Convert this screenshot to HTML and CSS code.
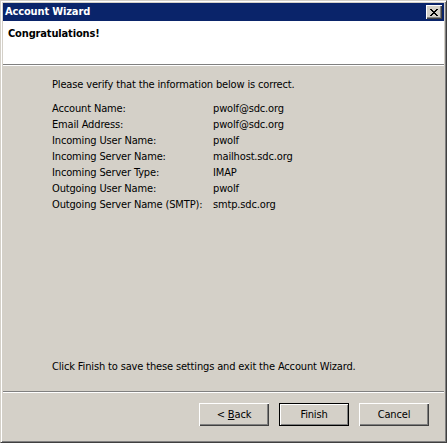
FILE: index.html
```html
<!DOCTYPE html>
<html lang="en">
<head>
    <meta charset="UTF-8">
    <title>Account Wizard</title>
    <link rel="stylesheet" href="styles.css">
</head>
<body>
    <div class="window">
        <div class="titlebar">
            <span class="title">Account Wizard</span>
            <button class="close-btn" aria-label="Close">
                <svg width="8" height="7" viewBox="0 0 8 7">
                    <path d="M0 0h2v1h1v1h2v-1h1v-1h2v1h-1v1h-1v1h-1v1h1v1h1v1h1v1h-2v-1h-1v-1h-2v1h-1v1h-2v-1h1v-1h1v-1h1v-1h-1v-1h-1v-1h-1z" fill="#000"/>
                </svg>
            </button>
        </div>

        <div class="header">
            <h1>Congratulations!</h1>
        </div>

        <div class="content">
            <p class="intro">Please verify that the information below is correct.</p>
            <div class="summary">
                <span>Account Name:</span><span>pwolf@sdc.org</span>
                <span>Email Address:</span><span>pwolf@sdc.org</span>
                <span>Incoming User Name:</span><span>pwolf</span>
                <span>Incoming Server Name:</span><span>mailhost.sdc.org</span>
                <span>Incoming Server Type:</span><span>IMAP</span>
                <span>Outgoing User Name:</span><span>pwolf</span>
                <span>Outgoing Server Name (SMTP):</span><span>smtp.sdc.org</span>
            </div>
            <p class="outro">Click Finish to save these settings and exit the Account Wizard.</p>
        </div>

        <div class="footer">
            <button class="btn">&lt; <u>B</u>ack</button>
            <button class="btn default">Finish</button>
            <button class="btn">Cancel</button>
        </div>
    </div>
</body>
</html>
```

FILE: styles.css
```css
:root {
    --face: #d4d0c8;
    --highlight: #ffffff;
    --shadow: #808080;
    --dark-shadow: #404040;
    --caption: #0a246a;
}

* {
    margin: 0;
    padding: 0;
    box-sizing: border-box;
}

body {
    font-family: 'DejaVu Sans Condensed', 'DejaVu Sans', sans-serif;
    font-size: 11px;
    line-height: 16px;
    letter-spacing: -0.15px;
    color: #000;
    background: var(--face);
}

.window {
    width: 447px;
    height: 443px;
    display: flex;
    flex-direction: column;
    background: var(--face);
    border: 1px solid;
    border-color: var(--face) var(--dark-shadow) var(--dark-shadow) var(--face);
    box-shadow: inset 1px 1px 0 var(--highlight), inset -1px -1px 0 var(--shadow);
    padding: 2px;
}

.titlebar {
    height: 18px;
    flex-shrink: 0;
    display: flex;
    align-items: center;
    justify-content: space-between;
    padding: 0 2px;
    background: var(--caption);
    color: #fff;
}

.title {
    font-weight: bold;
}

.close-btn {
    width: 16px;
    height: 14px;
    display: flex;
    align-items: center;
    justify-content: center;
    background: var(--face);
    border: none;
    box-shadow: inset 1px 1px 0 var(--highlight), inset -1px -1px 0 var(--dark-shadow), inset -2px -2px 0 var(--shadow);
}

.header {
    height: 44px;
    flex-shrink: 0;
    background: #fff;
    padding: 5px 5px 0;
    border-bottom: 1px solid var(--shadow);
    box-shadow: 0 1px 0 var(--highlight);
    margin-bottom: 1px;
}

.header h1 {
    font-size: 11px;
    font-weight: bold;
    line-height: 16px;
}

.content {
    flex: 1;
    display: flex;
    flex-direction: column;
    padding: 11px 0 16px 49px;
    border-bottom: 1px solid var(--shadow);
    box-shadow: 0 1px 0 var(--highlight);
}

.intro {
    margin-bottom: 8px;
}

.summary {
    display: grid;
    grid-template-columns: 161px 1fr;
}

.outro {
    margin-top: auto;
}

.footer {
    height: 48px;
    flex-shrink: 0;
    display: flex;
    justify-content: flex-end;
    gap: 10px;
    padding: 11px 15px 0 0;
}

.btn {
    width: 70px;
    height: 23px;
    font-family: inherit;
    font-size: 11px;
    letter-spacing: -0.15px;
    color: #000;
    background: var(--face);
    border: none;
    box-shadow: inset 1px 1px 0 var(--highlight), inset -1px -1px 0 var(--dark-shadow), inset -2px -2px 0 var(--shadow);
}

.btn.default {
    border: 1px solid #000;
    box-shadow: inset 1px 1px 0 var(--highlight), inset -1px -1px 0 var(--shadow);
}
```
